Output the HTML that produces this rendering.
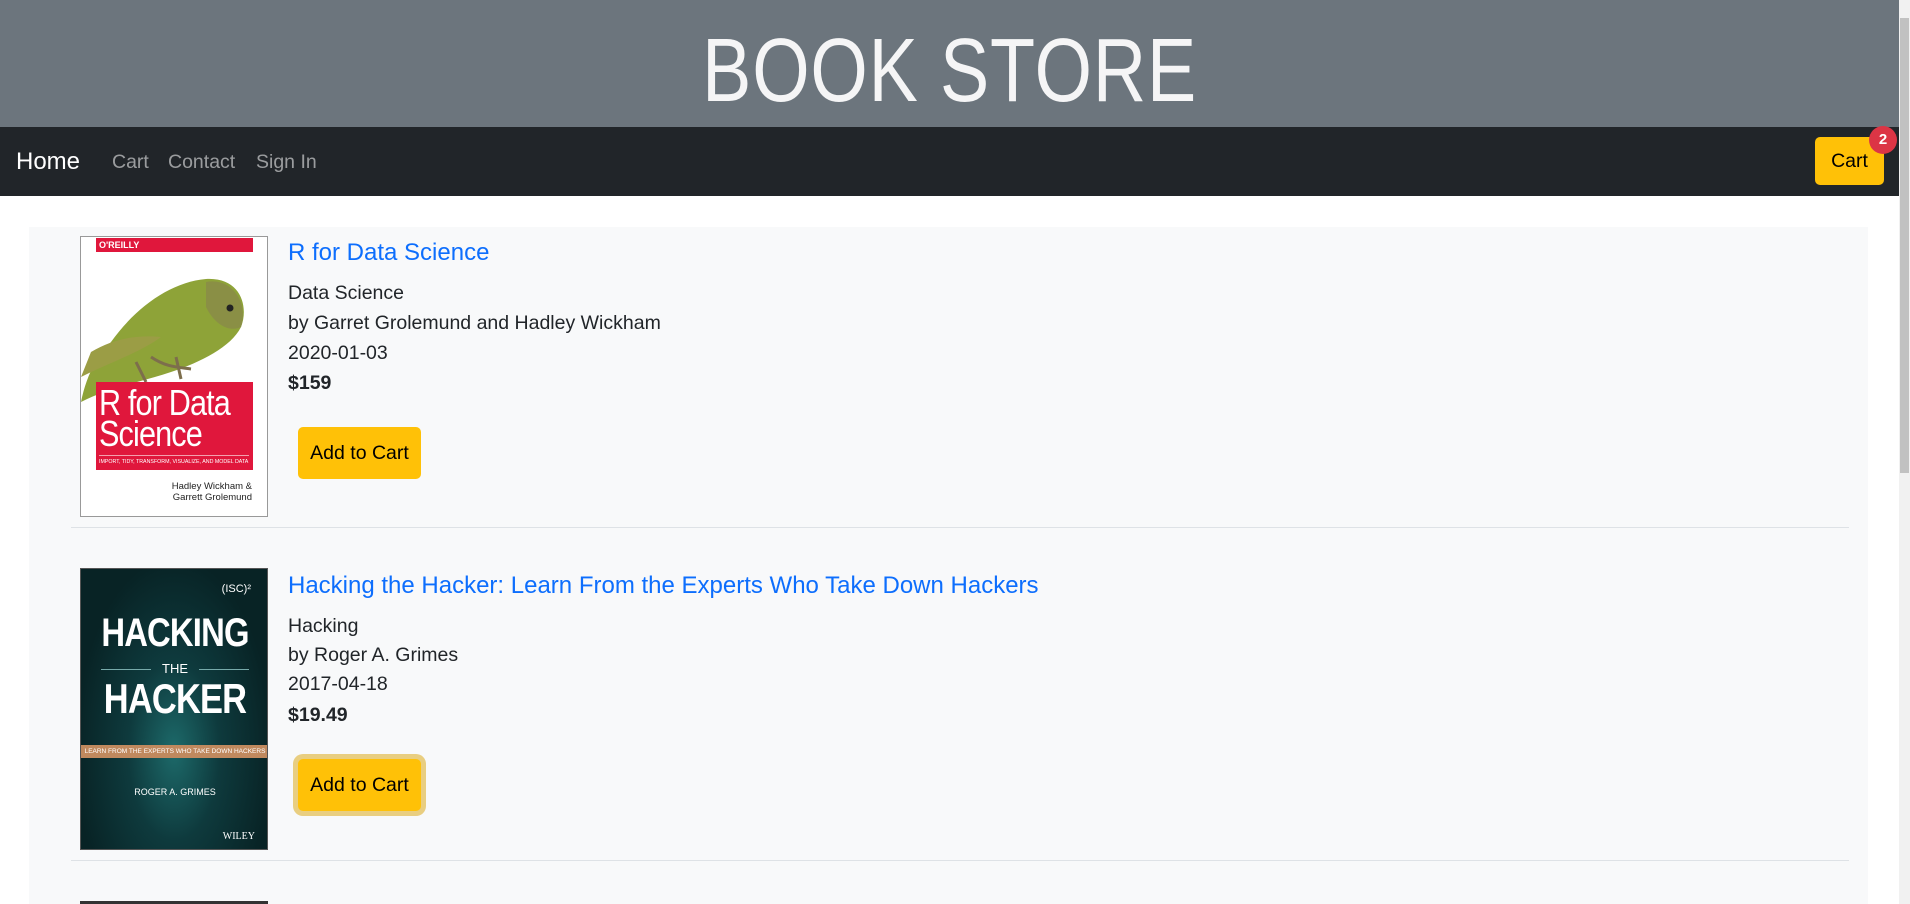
<!DOCTYPE html>
<html><head><meta charset="utf-8">
<style>
*{margin:0;padding:0;box-sizing:border-box}
html,body{width:1910px;height:904px;overflow:hidden;background:#fff;font-family:"Liberation Sans",sans-serif;}
.abs{position:absolute}
#hdr{left:0;top:0;width:1899px;height:127px;background:#6c757d}
#ttl{left:0;top:16px;width:1899px;text-align:center;color:rgba(255,255,255,.93);font-size:90px;line-height:110px;font-weight:normal;transform:scaleX(0.82);transform-origin:950px 0;letter-spacing:1px}
#nav{left:0;top:127px;width:1899px;height:69px;background:#212529}
.nl{color:rgba(255,255,255,.55);font-size:19.5px;top:151px}
#home{left:16px;top:148px;color:#fff;font-size:24px}
#cbtn{left:1815px;top:137px;width:69px;height:48px;background:#ffc107;border-radius:5px;color:#000;font-size:19.5px;line-height:48px;text-align:center}
#badge{left:1869px;top:126px;width:28px;height:28px;border-radius:50%;background:#dc3545;color:#fff;font-weight:bold;font-size:15px;line-height:28px;text-align:center}
#sb{left:1899px;top:0;width:11px;height:904px;background:#f1f1f1}
#sbt{left:1900px;top:18px;width:9px;height:455px;background:#c1c1c1}
#card{left:29px;top:227px;width:1839px;height:677px;background:#f8f9fa}
.t{color:#0d6efd;font-size:24px;left:288px}
.l{color:#212529;font-size:19.5px;left:288px}
.b{font-weight:bold}
.btn{width:123px;height:52px;background:#ffc107;border-radius:5px;color:#000;font-size:19.5px;line-height:52px;text-align:center;left:298px}
.hr{left:71px;width:1778px;height:1px;background:#dee2e6}
</style></head><body>
<div id="hdr" class="abs"></div>
<div id="ttl" class="abs">BOOK STORE</div>
<div id="nav" class="abs"></div>
<div id="home" class="abs">Home</div>
<div class="abs nl" style="left:112px">Cart</div>
<div class="abs nl" style="left:168px">Contact</div>
<div class="abs nl" style="left:256px">Sign In</div>
<div id="cbtn" class="abs">Cart</div>
<div id="badge" class="abs">2</div>
<div id="card" class="abs"></div>

<!-- Book 1 cover -->
<div class="abs" style="left:80px;top:236px;width:188px;height:281px;background:#fff;border:1px solid #999;overflow:hidden">
  <div class="abs" style="left:15px;top:1px;width:157px;height:14px;background:#e0173c;color:#fff;font-size:9px;font-weight:bold;line-height:14px;padding-left:3px">O'REILLY</div>
  <svg class="abs" style="left:0;top:0" width="188" height="170" viewBox="0 0 188 170">
    <path d="M0 165 C5 140 15 120 30 105 C55 70 90 45 125 42 C160 40 168 70 160 90 C150 110 120 125 90 135 C60 145 30 150 0 165Z" fill="#8ea338"/>
    <path d="M10 115 C35 100 60 98 80 100 C60 115 30 125 0 140Z" fill="#9b9d45"/>
    <path d="M125 45 C150 40 168 65 160 90 C150 95 135 90 125 70Z" fill="#8a8f45"/>
    <circle cx="149" cy="71" r="3.5" fill="#222"/>
    <path d="M70 120 C85 130 95 130 110 132 M95 120 L100 142 M55 125 L65 145" stroke="#7d6e4c" stroke-width="3" fill="none"/>
  </svg>
  <div class="abs" style="left:15px;top:145px;width:157px;height:88px;background:#e0173c"></div>
  <div class="abs" style="left:18px;top:150px;color:#fff;font-size:36px;line-height:31px;letter-spacing:-1px;white-space:nowrap;transform:scaleX(0.85);transform-origin:0 0">R for Data<br>Science</div>
  <div class="abs" style="left:18px;top:218px;width:150px;height:1px;background:#f3a0ae"></div>
  <div class="abs" style="left:18px;top:222px;color:#fff;font-size:5.3px;white-space:nowrap">IMPORT, TIDY, TRANSFORM, VISUALIZE, AND MODEL DATA</div>
  <div class="abs" style="right:15px;top:244px;color:#222;font-size:9.5px;text-align:right;line-height:11px;white-space:nowrap">Hadley Wickham &amp;<br>Garrett Grolemund</div>
</div>
<div class="abs t" style="top:239px">R for Data Science</div>
<div class="abs l" style="top:282px">Data Science</div>
<div class="abs l" style="top:312px">by Garret Grolemund and Hadley Wickham</div>
<div class="abs l" style="top:342px">2020-01-03</div>
<div class="abs l b" style="top:372px">$159</div>
<div class="abs btn" style="top:427px">Add to Cart</div>
<div class="abs hr" style="top:527px"></div>

<!-- Book 2 cover -->
<div class="abs" style="left:80px;top:568px;width:188px;height:282px;background:radial-gradient(ellipse at 50% 65%,#1d6a6a 0%,#0e3a3d 35%,#082325 75%);border:1px solid #555;overflow:hidden;color:#fff;text-align:center">
  <div class="abs" style="right:16px;top:14px;font-size:11px">(ISC)²</div>
  <div class="abs" style="left:0;width:188px;top:42px;font-size:40px;font-weight:bold;transform:scaleX(0.82);letter-spacing:-1px">HACKING</div>
  <div class="abs" style="left:0;width:188px;top:92px;font-size:13px">THE</div>
  <div class="abs" style="left:20px;top:100px;width:50px;height:1px;background:#7aa"></div>
  <div class="abs" style="left:118px;top:100px;width:50px;height:1px;background:#7aa"></div>
  <div class="abs" style="left:0;width:188px;top:106px;font-size:42px;font-weight:bold;transform:scaleX(0.82);letter-spacing:-1px">HACKER</div>
  <div class="abs" style="left:0;width:188px;top:176px;height:13px;background:#c0895e;font-size:6.5px;line-height:13px;white-space:nowrap">LEARN FROM THE EXPERTS WHO TAKE DOWN HACKERS</div>
  <div class="abs" style="left:0;width:188px;top:218px;font-size:9px">ROGER A. GRIMES</div>
  <div class="abs" style="right:12px;top:262px;font-size:10px;font-family:'Liberation Serif',serif">WILEY</div>
</div>
<div class="abs t" style="top:572px">Hacking the Hacker: Learn From the Experts Who Take Down Hackers</div>
<div class="abs l" style="top:615px">Hacking</div>
<div class="abs l" style="top:644px">by Roger A. Grimes</div>
<div class="abs l" style="top:673px">2017-04-18</div>
<div class="abs l b" style="top:704px">$19.49</div>
<div class="abs btn" style="top:759px;box-shadow:0 0 0 5px rgba(217,164,6,.5)">Add to Cart</div>
<div class="abs hr" style="top:860px"></div>
<div class="abs" style="left:80px;top:901px;width:188px;height:3px;background:#333"></div>

<div id="sb" class="abs"></div>
<div id="sbt" class="abs"></div>
</body></html>
